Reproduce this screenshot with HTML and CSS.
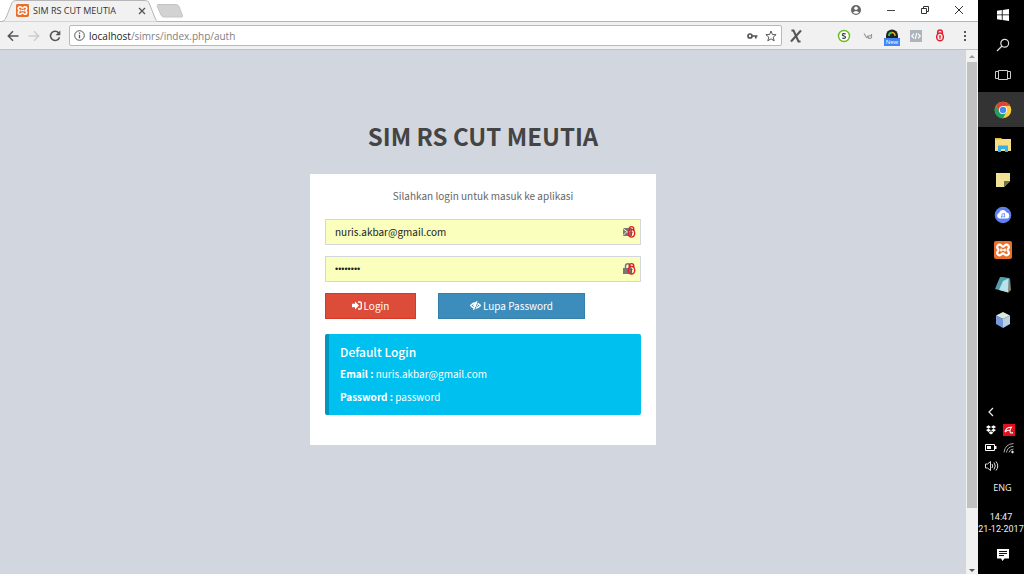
FILE: index.html
```html
<!DOCTYPE html>
<html lang="id">
<head>
<meta charset="utf-8">
<title>SIM RS CUT MEUTIA</title>
<link rel="stylesheet" href="styles.css">
</head>
<body>
<svg class="defs" aria-hidden="true">
  <symbol id="xampp" viewBox="0 0 18 18">
    <rect width="18" height="18" rx="2" fill="#ea6f2a"/>
    <path d="M5.600 3.700C7.400 3.700 7.600 5.600 9 5.600S10.600 3.700 12.400 3.700C14.200 3.700 15 5 14.800 6.600C14.600 7.800 13.500 7.800 13.500 9S14.600 10.200 14.800 11.400C15 13 14.200 14.300 12.400 14.300C10.600 14.300 10.400 12.400 9 12.400S7.400 14.300 5.600 14.300C3.800 14.300 3 13 3.200 11.400C3.400 10.200 4.500 10.200 4.500 9S3.400 7.800 3.200 6.600C3 5 3.800 3.700 5.600 3.700Z" fill="none" stroke="#fff" stroke-width="2.200"/>
    <path d="M6.500 9h5M7 7.500v3M11 7.500v3" stroke="#fff" stroke-width="1.600"/>
  </symbol>
  <symbol id="redlock" viewBox="0 0 10 14">
    <path d="M2.500 6V3.500a2.500 2.500 0 0 1 5 0V6" fill="none" stroke="#e0202f" stroke-width="1.600"/>
    <ellipse cx="5" cy="8.500" rx="3.600" ry="4.200" fill="none" stroke="#e0202f" stroke-width="1.600"/>
    <path d="M5 7v4M3.800 7.500h2.400" stroke="#e0202f" stroke-width="1.200"/>
  </symbol>
</svg>
<div class="desktop">
  <div class="browser">
    <header class="titlebar">
      <div class="tab">
        <svg class="tab-shape" viewBox="0 0 160 22" preserveAspectRatio="none"><path d="M0 22C4 21 5 20 6 18L12 3Q13 .5 16 .5H147Q150 .5 151 3L157 18Q158 21 160 22Z" fill="#f1f1f1" stroke="#b5b5b5"/></svg>
        <svg class="favicon" viewBox="0 0 18 18"><use href="#xampp"/></svg>
        <span class="tab-title">SIM RS CUT MEUTIA</span>
        <button class="bare" aria-label="Close tab"><svg width="8" height="8" viewBox="0 0 8 8"><path d="M1 1l6 6M7 1L1 7" stroke="#555" stroke-width="1.300"/></svg></button>
      </div>
      <button class="bare newtab" aria-label="New tab"><svg width="28" height="14" viewBox="0 0 28 14"><path d="M2 .5h18q2 0 3 2l3.500 9q.5 1.500-1 1.500H8q-2 0-3-2L1.300 2.500Q.8.500 2 .5Z" fill="#d2d2d2" stroke="#c4c4c4"/></svg></button>
      <div class="window-buttons">
        <button class="bare" aria-label="Account"><svg width="12" height="12" viewBox="0 0 12 12"><circle cx="6" cy="6" r="5" fill="#666"/><circle cx="6" cy="4.300" r="1.800" fill="#fff"/><path d="M2.800 8.500Q6 5.500 9.200 8.500Q6 11 2.800 8.500Z" fill="#fff"/></svg></button>
        <button class="bare" aria-label="Minimize"><svg width="10" height="10" viewBox="0 0 10 10"><path d="M1 5.500h8" stroke="#444"/></svg></button>
        <button class="bare" aria-label="Restore"><svg width="10" height="10" viewBox="0 0 10 10" fill="none" stroke="#333"><path d="M1.500 3.500h5v5h-5zM3.500 3V1.500h5v5H7"/></svg></button>
        <button class="bare" aria-label="Close"><svg width="10" height="10" viewBox="0 0 10 10"><path d="M1 1l8 8M9 1L1 9" stroke="#333"/></svg></button>
      </div>
    </header>
    <nav class="toolbar">
      <div class="nav-buttons">
        <button class="bare" aria-label="Back"><svg width="12" height="12" viewBox="0 0 12 12" fill="none" stroke="#555" stroke-width="1.500"><path d="M11.500 6H1.500M6 1.300L1.300 6L6 10.700"/></svg></button>
        <button class="bare" aria-label="Forward"><svg width="12" height="12" viewBox="0 0 12 12" fill="none" stroke="#ccc" stroke-width="1.500"><path d="M.5 6h10M6 1.300L10.700 6L6 10.700"/></svg></button>
        <button class="bare" aria-label="Reload"><svg width="12" height="12" viewBox="0 0 12 12"><path d="M9.700 3A4.600 4.600 0 1 0 10.500 7.200" fill="none" stroke="#555" stroke-width="1.600"/><path d="M11.300.5V5.300H6.500Z" fill="#555"/></svg></button>
      </div>
      <div class="omnibox">
        <svg width="11" height="11" viewBox="0 0 11 11"><circle cx="5.500" cy="5.500" r="4.800" fill="none" stroke="#555"/><path d="M5.500 4.800v3.500M5.500 2.500v1.300" stroke="#555" stroke-width="1.300"/></svg>
        <span class="url"><b>localhost</b>/simrs/index.php/auth</span>
        <svg width="11" height="8" viewBox="0 0 11 8"><circle cx="3" cy="4" r="2" fill="none" stroke="#555" stroke-width="1.700"/><path d="M5 4h5.500M8.800 4v2.500" stroke="#555" stroke-width="1.700"/></svg>
        <svg width="12" height="12" viewBox="0 0 12 12"><path d="M6 1l1.400 3.500 3.700.2-2.900 2.400 1 3.700L6 8.800l-3.200 2 1-3.700L.9 4.700l3.700-.2Z" fill="none" stroke="#555"/></svg>
      </div>
      <div class="extensions">
        <svg class="ext-x" width="12" height="14" viewBox="0 0 12 14"><path d="M1.500 1.500H3.500L8.500 12.500H10.500" fill="none" stroke="#555" stroke-width="2"/><path d="M11 1.500L1 12.500" stroke="#555" stroke-width="2"/></svg>
        <svg width="14" height="14" viewBox="0 0 14 14"><circle cx="7" cy="7" r="5.500" fill="#fff" stroke="#62bd19" stroke-width="1.400"/><path d="M8.700 5Q5.300 3.800 5.400 5.900Q5.500 6.700 7 7Q8.600 7.300 8.500 8.200Q8.300 9.900 5.200 9" fill="none" stroke="#333" stroke-width="1.200"/></svg>
        <svg width="14" height="14" viewBox="0 0 14 14" fill="none" stroke="#999" stroke-width="1.100"><path d="M3 4.500L5.500 8.500Q7 9 6.500 6.500M6.800 7Q7 9.500 8.500 9.500"/><circle cx="9" cy="8" r="1.500"/><path d="M10.500 9V5"/></svg>
        <span class="speed"><svg width="14" height="16" viewBox="0 0 14 16"><path d="M1 7.500a6 6 0 0 1 12 0v4.500H1Z" fill="#222"/><path d="M4 8a3.300 3.300 0 0 1 3-3.500" stroke="#37c94b" stroke-width="1.800" fill="none"/><path d="M7 4.500a3.300 3.300 0 0 1 3 3.500" stroke="#edb12c" stroke-width="1.300" fill="none"/></svg><span class="badge">New</span></span>
        <svg width="14" height="14" viewBox="0 0 14 14"><rect x="1" y="1" width="12" height="12" fill="#adb5bc"/><path d="M5 4.700L2.700 7L5 9.300M9 4.700L11.300 7L9 9.300M7.800 4L6.200 10" fill="none" stroke="#fff" stroke-width="1.100"/></svg>
        <svg width="14" height="13" viewBox="0 0 10 14"><use href="#redlock"/></svg>
        <svg class="menu" width="4" height="12" viewBox="0 0 4 12" fill="#555"><path d="M1 1h2v2H1zM1 5h2v2H1zM1 9h2v2H1z"/></svg>
      </div>
    </nav>
    <div class="viewport">
      <main class="page">
        <h1>SIM RS CUT MEUTIA</h1>
        <form class="card">
          <p class="lead">Silahkan login untuk masuk ke aplikasi</p>
          <div class="field">
            <input type="email" aria-label="Email" value="nuris.akbar@gmail.com">
            <svg width="13" height="14" viewBox="0 0 13 14"><path d="M0 3h9v8H0z" fill="#777"/><path d="M0 3.500L5 7.500L9 3.500M0 10.500L3.500 7" stroke="#fafcc0" fill="none"/><svg x="4" width="9" height="14" viewBox="0 0 10 14"><use href="#redlock"/></svg></svg>
          </div>
          <div class="field">
            <input class="secret" type="password" aria-label="Password" value="password">
            <svg width="13" height="14" viewBox="0 0 13 14"><path d="M0 6h9v6H0z" fill="#777"/><path d="M2.500 6V4a2.300 2.300 0 0 1 4.600 0v2" stroke="#777" stroke-width="1.500" fill="none"/><svg x="4" width="9" height="14" viewBox="0 0 10 14"><use href="#redlock"/></svg></svg>
          </div>
          <div class="actions">
            <button type="submit" class="btn login"><svg width="10" height="9" viewBox="0 0 10 9"><path d="M0 2.800h3V.6L7 4.500L3 8.400V6.200H0Z" fill="#fff"/><path d="M6 1h2Q9.300 1 9.300 2v5q0 1-1.300 1H6" fill="none" stroke="#fff" stroke-width="1.300"/></svg>Login</button>
            <button type="button" class="btn forgot"><svg width="11" height="9" viewBox="0 0 11 9"><path d="M.6 4.500Q5.500-1 10.400 4.500Q5.500 10 .6 4.500Z" fill="none" stroke="#fff" stroke-width="1.400"/><circle cx="5.500" cy="4.300" r="2.300" fill="#fff"/><path d="M8 0L4.500 9" stroke="#3c8dbc"/><path d="M7 0L3.500 9" stroke="#fff" stroke-width="1.200"/></svg>Lupa Password</button>
          </div>
          <section class="callout">
            <h2>Default Login</h2>
            <p><b>Email :</b> nuris.akbar@gmail.com</p>
            <p><b>Password :</b> password</p>
          </section>
        </form>
      </main>
      <div class="scrollbar">
        <svg width="12" height="12" viewBox="0 0 12 12"><path d="M3 8l3-3 3 3Z" fill="#999"/></svg>
        <div class="thumb"></div>
        <svg width="12" height="12" viewBox="0 0 12 12"><path d="M3 7l3 3 3-3Z" fill="#555"/></svg>
      </div>
    </div>
  </div>
  <aside class="taskbar">
    <div class="system">
      <button class="bare" aria-label="Start"><svg width="14" height="14" viewBox="0 0 14 14" fill="#fff"><path d="M1 2.800L5.800 2v4.500H1zM6.600 1.900L13 1v5.500H6.600zM1 7.300h4.800V12L1 11.200zM6.600 7.300H13V13l-6.400-.9z"/></svg></button>
      <button class="bare" aria-label="Search"><svg width="14" height="14" viewBox="0 0 14 14" fill="none" stroke="#ddd" stroke-width="1.200"><circle cx="8.700" cy="5.300" r="3.900"/><path d="M6 8L1 13"/></svg></button>
      <button class="bare" aria-label="Task view"><svg width="16" height="12" viewBox="0 0 16 12" fill="none" stroke="#ccc"><path d="M3.500 1.500h9v9h-9zM3 2.500H.5v7H3M13 2.500h2.500v7H13"/></svg></button>
    </div>
    <div class="apps">
      <button class="bare active" aria-label="Chrome"><svg width="18" height="18" viewBox="0 0 18 18"><circle cx="9" cy="9" r="8.300" fill="#f9ce3c"/><path d="M1.800 4.850A8.300 8.300 0 0 1 16.200 4.850L9 5L5.500 11Z" fill="#dc4437"/><path d="M1.800 4.850A8.300 8.300 0 0 0 9 17.300L12.500 11L9 13Q6.500 13 5.500 11Z" fill="#20a163"/><circle cx="9" cy="9" r="4" fill="#fff"/><circle cx="9" cy="9" r="3.200" fill="#4688f1"/></svg></button>
      <button class="bare" aria-label="Explorer"><svg width="18" height="16" viewBox="0 0 18 16"><path d="M1 1h6l1 1h9v12H1z" fill="#f8df83"/><path d="M1 1h6v1.500H1z" fill="#e8b83e"/><path d="M4 15V8.500h10V15h-3v-3H7v3Z" fill="#39aee4"/></svg></button>
      <button class="bare" aria-label="Notes"><svg width="16" height="16" viewBox="0 0 16 16"><path d="M1 1h14v8l-6 6H1z" fill="#f2e394"/><path d="M15 9H9v6Z" fill="#756e46"/></svg></button>
      <button class="bare" aria-label="Cloud music"><svg width="18" height="18" viewBox="0 0 18 18"><circle cx="9" cy="9" r="8.300" fill="#5e80ef"/><path d="M5.500 12.500a2.800 2.800 0 0 1-.5-5.400a4 4 0 0 1 7.600-.5a3 3 0 0 1 .4 5.900Z" fill="#fff"/><path d="M8 11V8l2.500-.5v3" fill="none" stroke="#5e80ef" stroke-width=".8"/><path d="M7 10.300h1.300v1.200H7zM9.500 10h1.300v1.200H9.500z" fill="#5e80ef"/></svg></button>
      <button class="bare" aria-label="XAMPP"><svg width="18" height="18" viewBox="0 0 18 18"><use href="#xampp"/></svg></button>
      <button class="bare" aria-label="Notepad"><svg width="18" height="18" viewBox="0 0 18 18"><path d="M7 1l9 1.500 1 11.500-3 3z" fill="#8b806c"/><path d="M6 1l9 1-1 14L1 13Z" fill="#4f9fae"/><path d="M14.500 2.500L9 5L5 14L14 16.500Z" fill="#b9e1e7"/></svg></button>
      <button class="bare" aria-label="VirtualBox"><svg width="18" height="18" viewBox="0 0 18 18"><path d="M9 1l7 3.500L9 8L2 4.500Z" fill="#d8eadc"/><path d="M2 4.500L9 8v9l-7-4Z" fill="#7898dc"/><path d="M16 4.500L9 8v9l7-4Z" fill="#b9cfe4"/></svg></button>
    </div>
    <div class="tray">
      <button class="bare" aria-label="Show hidden icons"><svg width="12" height="12" viewBox="0 0 12 12"><path d="M8 2L4 6l4 4" fill="none" stroke="#eee" stroke-width="1.200"/></svg></button><span></span>
      <svg width="12" height="12" viewBox="0 0 12 12" fill="#fff"><path d="M1 3l2.500-1.700L6 3L3.500 4.700zM6 3l2.500-1.700L11 3L8.500 4.700zM1 6l2.500-1.300L6 6.300L3.500 8zM6 6.300l2.500-1.600L11 6L8.500 8zM3.500 8.700L6 7.200l2.500 1.500L6 10.500z"/></svg>
      <svg width="12" height="12" viewBox="0 0 12 12"><path d="M0 0h12v12H0z" fill="#e3101b"/><path d="M2 8Q3 3 8.500 3.200Q6 7 7.500 8.700Q8.500 9.500 10 8.500M2 8Q4.500 5.500 7 6.500" fill="none" stroke="#fff" stroke-width="1.100"/></svg>
      <svg width="12" height="12" viewBox="0 0 12 12"><path d="M.5 2.500h9v6h-9z" fill="none" stroke="#fff"/><path d="M2 4h4v3H2zM10 4h1.500v3H10z" fill="#fff"/></svg>
      <svg width="12" height="12" viewBox="0 0 12 12" fill="none" stroke="#aaa"><path d="M1 10.500Q2 2 10.500 1.500M3.500 10.500Q4 5 10.500 4.300M6 10.500Q6.500 7.500 10.500 7"/><circle cx="9.500" cy="10" r=".8" fill="#fff" stroke="#fff"/></svg>
      <svg width="14" height="12" viewBox="0 0 14 12" fill="none" stroke="#ddd"><path d="M.5 4h2L5.500 1.500v9L2.500 8h-2zM7 4q1.500 2 0 4M9 2.500q2.500 3.500 0 7M11 1.500q3.500 4.500 0 9"/></svg>
    </div>
    <div class="lang">ENG</div>
    <time class="clock">14:47<br>21-12-2017</time>
    <button class="bare notice" aria-label="Notifications"><svg width="14" height="14" viewBox="0 0 14 14"><path d="M1 1h12v9.500H8.500L6.500 13L5 10.500H1z" fill="#fff"/><path d="M3 3.500h8M3 5.500h8M3 7.500h5" stroke="#111"/></svg></button>
  </aside>
</div>
</body>
</html>
```
FILE: styles.css
```css
* { box-sizing: border-box; }

body {
  margin: 0;
  font-family: "Noto Sans CJK SC", "Noto Sans", sans-serif;
  font-size: 10px;
  line-height: 14px;
  color: #333;
}

svg { display: block; flex: none; }
h1, h2, p { margin: 0; }
.defs { position: absolute; width: 0; height: 0; }

.bare {
  display: flex;
  align-items: center;
  justify-content: center;
  padding: 0;
  border: 0;
  background: none;
}

.desktop { display: flex; height: 100vh; overflow: hidden; }
.browser { display: flex; flex: 1; flex-direction: column; min-width: 0; }

/* Browser chrome */
.titlebar { display: flex; align-items: center; height: 22px; background: #fff; border-bottom: 1px solid #b5b5b5; }
.tab {
  position: relative;
  display: flex;
  align-items: center;
  width: 158px;
  height: 22px;
  padding: 0 12px 0 16px;
}
.tab-shape { position: absolute; inset: 0; width: 100%; height: 100%; }
.tab > :not(.tab-shape) { position: relative; }
.favicon { width: 13px; height: 13px; }
.tab-title { flex: 1; padding-left: 4px; white-space: nowrap; font-family: "Open Sans", sans-serif; font-size: 9px; }
.newtab { margin-left: -2px; }
.window-buttons { display: flex; gap: 24px; margin-left: auto; padding-right: 14px; }
.window-buttons svg { margin-top: -2px; }

.toolbar { display: flex; align-items: center; height: 28px; padding: 0 11px 0 7px; background: #f1f1f1; border-bottom: 1px solid #c0c0c4; }
.nav-buttons { display: flex; gap: 9px; width: 62px; }
.omnibox {
  display: flex;
  flex: 1;
  align-items: center;
  gap: 7px;
  height: 21px;
  padding: 0 4px;
  background: #fff;
  border: 1px solid #b9b9b9;
  border-radius: 2px;
}
.url { flex: 1; margin-left: -3px; font-family: "Open Sans", sans-serif; font-size: 10px; color: #808080; }
.url b { font-weight: 400; color: #222; }
.extensions { display: flex; align-items: center; gap: 10px; padding-left: 8px; }
.ext-x { margin-right: 25px; }
.menu { margin-left: 6px; }
.speed { position: relative; }
.badge {
  position: absolute;
  left: -1px;
  bottom: -2px;
  width: 16px;
  background: #4285f4;
  color: #fff;
  font: 6px/8px "Open Sans", sans-serif;
  text-align: center;
}

/* Page */
.viewport { display: flex; flex: 1; min-height: 0; }
.page { flex: 1; padding: 69px 16px; background: #d2d6de; overflow: hidden; }
h1 { font-size: 24px; line-height: 34px; color: #444; text-align: center; }
.card { max-width: 346px; margin: 21px auto 0; padding: 15px 15px 30px; background: #fff; }
.lead { margin-bottom: 16px; line-height: 14px; color: #666; text-align: center; }

.field { position: relative; margin-bottom: 11px; }
.field input {
  display: block;
  width: 100%;
  height: 26px;
  padding: 0 30px 2px 9px;
  border: 1px solid #d2d6de;
  border-radius: 0;
  background: #faffbd;
  color: #222;
  font: inherit;
}
.field .secret { padding-bottom: 0; font-family: "Liberation Sans", sans-serif; font-size: 9px; }
.field svg { position: absolute; top: 6px; right: 5px; }
.field svg svg { position: static; }

.actions { display: flex; gap: 22px; margin-bottom: 15px; }
.btn {
  display: flex;
  align-items: center;
  justify-content: center;
  gap: 2px;
  height: 26px;
  padding: 0 0 1px;
  border: 1px solid;
  color: #fff;
  font: inherit;
}
.login { width: 91px; background: #dd4b39; border-color: #d73925; }
.forgot { width: 147px; background: #3c8dbc; border-color: #367fa9; }

.callout {
  padding: 10px 20px 11px 11px;
  border-left: 4px solid #0097bc;
  border-radius: 2px;
  background: #00c0ef;
  color: #fff;
}
.callout h2 { margin-bottom: 7px; font-size: 12px; line-height: 15px; font-weight: 500; }
.callout p { line-height: 15px; }
.callout p + p { margin-top: 8px; }

.scrollbar { display: flex; flex-direction: column; width: 12px; background: #f1f1f1; }
.thumb { flex: 0 1 446px; margin: 0 1px; background: #c1c1c1; }
.scrollbar svg:last-child { margin-top: auto; }

/* Taskbar */
.taskbar { display: flex; flex-direction: column; width: 46px; background: #000; color: #eee; font-family: "Open Sans", sans-serif; font-size: 9px; line-height: 12px; }
.system { display: grid; grid-auto-rows: 30px; padding: 0 0 2px 3px; }
.apps { display: grid; grid-auto-rows: 35px; }
.apps .bare { padding-left: 3px; }
.active { background: #333; }
.tray { display: grid; grid-template-columns: 12px 12px; grid-auto-rows: 18px; align-items: center; column-gap: 6px; margin-top: auto; padding-left: 7px; }
.lang { margin-top: 7px; padding-left: 3px; text-align: center; }
.clock { margin: 17px 0 9px; font-family: Roboto, sans-serif; text-align: center; white-space: nowrap; }
.notice { height: 22px; margin-bottom: 8px; padding-left: 3px; }
```
